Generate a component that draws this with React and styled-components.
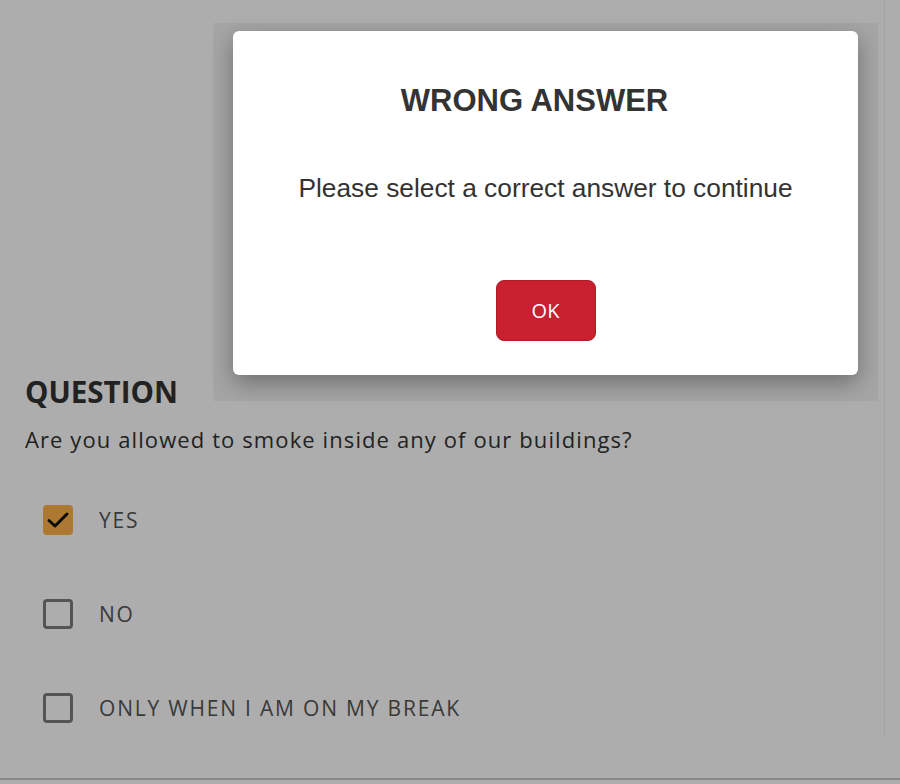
import React, { useState } from 'react'
import styled, { createGlobalStyle } from 'styled-components'

const GlobalStyle = createGlobalStyle`
  html, body {
    margin: 0;
    padding: 0;
    background: #ffffff;
    font-family: "Open Sans", "Liberation Sans", sans-serif;
  }
`

const Page = styled.div`
  position: relative;
  width: 900px;
  height: 784px;
  overflow: hidden;
  display: flex;
  flex-direction: column;
`

const QuizCard = styled.section`
  box-sizing: border-box;
  width: 885px;
  height: 737px;
  padding: 370px 0 0 25px;
  border-right: 1px solid #f2f2f2;
`

const Heading = styled.h2`
  margin: 0;
  font-size: 29.5px;
  font-weight: 700;
  line-height: 44px;
  color: #333;
`

const QuestionText = styled.p`
  margin: 10px 0 0;
  font-size: 22px;
  line-height: 30px;
  color: #333;
  letter-spacing: 1.1px;
`

const Options = styled.div`
  display: flex;
  flex-direction: column;
  gap: 64px;
  margin-top: 51px;
  padding-left: 18px;
`

const Option = styled.label`
  display: flex;
  align-items: center;
  gap: 26px;
  height: 30px;
  cursor: pointer;
`

const Box = styled.span`
  box-sizing: border-box;
  width: 30px;
  height: 30px;
  border-radius: 4px;
  display: flex;
  align-items: center;
  justify-content: center;
  border: ${({ checked }) => (checked ? 'none' : '3px solid #7d7d7d')};
  background: ${({ checked }) => (checked ? '#ffb34b' : 'transparent')};
`

const OptionLabel = styled.span`
  font-size: 21px;
  color: #555;
  letter-spacing: 1.8px;
  text-transform: uppercase;
`

const Footer = styled.div`
  margin-top: auto;
  height: 4px;
  border-top: 2px solid #c8c8c8;
`

const Overlay = styled.div`
  position: absolute;
  inset: 0;
  background: rgba(0, 0, 0, 0.32);
  display: flex;
  align-items: flex-start;
  padding: 23px 0 0 213px;
`

const ModalFrame = styled.div`
  box-sizing: border-box;
  width: 665px;
  padding: 8px 20px 26px;
  background: rgba(0, 0, 0, 0.045);
`

const Modal = styled.div`
  box-sizing: border-box;
  height: 344px;
  background: #fff;
  border-radius: 6px;
  box-shadow: 0 8px 22px rgba(0, 0, 0, 0.32);
  display: flex;
  flex-direction: column;
  align-items: center;
  padding-top: 50px;
  font-family: "Liberation Sans", Arial, sans-serif;
`

const ModalTitle = styled.h3`
  margin: 0 22px 0 0;
  font-size: 31px;
  line-height: 40px;
  font-weight: 700;
  color: #333;
`

const ModalText = styled.p`
  margin: 52px 0 0;
  font-size: 26.3px;
  line-height: 30px;
  color: #333;
`

const OkButton = styled.button`
  margin-top: 77px;
  width: 100px;
  height: 61px;
  border: 1px solid #b31b29;
  border-radius: 8px;
  background: #c8202f;
  color: #fff;
  font-family: "Open Sans", "Liberation Sans", sans-serif;
  font-size: 20px;
  cursor: pointer;
`

const answers = ['Yes', 'No', 'Only when I am on my break']

const Check = () => (
  <svg width="24" height="24" viewBox="0 0 24 24" fill="none">
    <path d="M3 12.5 L9 18 L21 6" stroke="#111" strokeWidth="3" strokeLinecap="round" strokeLinejoin="round" />
  </svg>
)

export default function App() {
  const [selected] = useState(0)

  return (
    <>
      <GlobalStyle />
      <Page>
        <QuizCard>
          <Heading>QUESTION</Heading>
          <QuestionText>Are you allowed to smoke inside any of our buildings?</QuestionText>
          <Options>
            {answers.map((a, i) => (
              <Option key={a}>
                <Box checked={i === selected}>{i === selected && <Check />}</Box>
                <OptionLabel>{a}</OptionLabel>
              </Option>
            ))}
          </Options>
        </QuizCard>
        <Footer />
        <Overlay>
          <ModalFrame>
            <Modal>
              <ModalTitle>WRONG ANSWER</ModalTitle>
              <ModalText>Please select a correct answer to continue</ModalText>
              <OkButton>OK</OkButton>
            </Modal>
          </ModalFrame>
        </Overlay>
      </Page>
    </>
  )
}
